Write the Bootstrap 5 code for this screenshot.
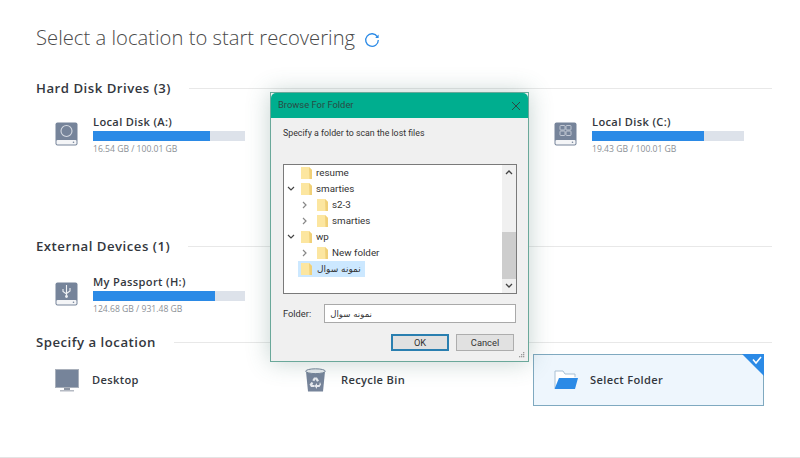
<!DOCTYPE html>
<html lang="en">
<head>
<meta charset="utf-8">
<title>Select a location</title>
<link href="https://cdn.jsdelivr.net/npm/bootstrap@5.3.0/dist/css/bootstrap.min.css" rel="stylesheet">
<style>
html,body{height:458px;overflow:hidden;background:#fff}
body{font-family:"Open Sans","Noto Sans",sans-serif;color:#333;position:relative}
.page-wrap{height:458px;padding:0 32px 0 33px;border-bottom:1px solid #e4e4e4}
.page-title{font-family:"Open Sans",sans-serif;font-weight:300;font-size:20.2px;line-height:30px;color:#4a4a4a;margin:0;padding:22px 0 0 3px;height:74px;letter-spacing:.02px}
.page-title svg{margin-left:9px;vertical-align:-3px}
.sec-head{height:20px;padding-left:3px;gap:18px;font-weight:600;font-size:13.2px;line-height:20px;color:#33373e;letter-spacing:.5px}
.sec-head::after{content:"";flex:1;height:1px;background:#e8e8e8;margin-right:-4px}
.sec-head span{white-space:nowrap}
.loc-grid{display:grid;grid-template-columns:repeat(3,231px);column-gap:19px}
.row-hard{margin-top:14px;height:124px}
.row-ext{margin-top:16px;height:60px}
.row-spec{margin-top:2px}
.head-first{margin-top:4px}
.drive{padding-left:22px;gap:15px;height:44px}
.drive.drive-last{padding-left:21px}
.drive-body{width:152px}
.drive-name{font-weight:600;font-size:11.1px;line-height:15px;height:17px;color:#33373e;letter-spacing:.35px}
.drive-bar{height:10px;border-radius:0;background:#dde2ea}
.drive-bar .progress-bar{background:#2b8ae6}
.drive-size{font-size:8.6px;line-height:12px;margin-top:2px;color:#8b9096}
.spot{height:52px;padding-left:22px;gap:13px;font-weight:600;font-size:11.1px;color:#33373e;letter-spacing:.35px;position:relative}
.spot.spot-bin{gap:15px}
.spot.active{background:#eef6fd;border:1px solid #7fa9c0;padding-left:20px;gap:12px}
.corner{position:absolute;top:-1px;right:-1px}
.browse{position:absolute;left:270px;top:92px;width:259px;height:270px;background:#f0f0f0;border:1px solid #6aa89a;border-radius:0;box-shadow:0 0 22px rgba(60,110,100,.3);font-family:Roboto,sans-serif;font-size:8.8px;color:#333}
.browse-head{height:25px;padding:0 7px;background:#00ae8f;color:#2b4a44;font-size:9.4px;border:0;border-radius:0}
.browse-close{line-height:0}
.browse-body{padding:0 12px}
.browse-hint{padding-top:9px;height:46px;line-height:12px}
.tree{height:130px;background:#fff;border:1px solid #7a7a7a;position:relative;overflow:hidden;width:234px}
.tree-row{height:16px;line-height:16px;font-size:9.8px;white-space:nowrap}
.chev{width:14px;flex:none;text-align:center;line-height:0}
.lvl1{padding-left:14px}
.folder{flex:none;margin-right:4px}
.fold-a{margin-left:3px}
.fold-b{margin-left:5px}
.selected-row{background:#cce8ff;padding:0 4px 0 3px;height:16px;display:inline-flex;align-items:center}
.selected-row .folder{margin-right:5px}
.scroll-rail{position:absolute;right:0;top:0;bottom:0;width:14px;background:#f0f0f0}
.scroll-thumb{position:absolute;left:0;right:0;top:67px;height:47px;background:#cdcdcd}
.scroll-up{position:absolute;top:4px;left:3px;line-height:0}
.scroll-down{position:absolute;bottom:4px;left:3px;line-height:0}
.folder-field{margin-top:10px;gap:13px;height:19px}
.folder-field label{font-size:9.3px;margin:0;width:31px}
.folder-input{height:19px;width:192px;padding:0 5px;font-size:8.6px;border:1px solid #a9a9a9;border-radius:0;font-family:"DejaVu Sans",sans-serif;background:#fff;color:#333;line-height:17px;flex:none}
.arabic{font-family:"DejaVu Sans",sans-serif;font-size:9px}
.browse-btns{margin-top:11px;gap:7px;padding-right:2px}
.browse-btn{width:58px;height:17px;padding:0;font-size:9.3px;line-height:15px;border-radius:0;background:#e1e1e1;border:1px solid #adadad;color:#333}
.browse-btn.primary-btn{border:2px solid #2a7fb0;line-height:13px}
.grip{position:absolute;right:3px;bottom:2px;line-height:0}
</style>
</head>
<body>
<svg width="0" height="0" class="position-absolute"><defs><symbol id="yf" viewBox="0 0 11 12"><path d="M0 0h8l3 3v9H0z" fill="#fce6a0"/><path d="M8 0l3 3v9H8.500z" fill="#f0d078"/></symbol></defs></svg>
<main class="page-wrap">
  <h1 class="page-title">Select a location to start recovering<svg width="16" height="16" viewBox="0 0 16 16" fill="none"><path d="M13.400 4.800A6.300 6.300 0 1 0 14.300 8" stroke="#2b8ae6" stroke-width="1.300"/><path d="M14.600 2.600v3.400h-3.400z" fill="#2b8ae6"/></svg></h1>

  <section>
    <div class="sec-head head-first d-flex align-items-center"><span>Hard Disk Drives (3)</span></div>
    <div class="loc-grid row-hard">
      <div class="drive d-flex align-items-center">
        <svg width="23" height="24" viewBox="0 0 23 24"><rect x="0.5" y="0.5" width="22" height="23" rx="2" fill="#76849a"/><rect x="1.5" y="18" width="20" height="4.500" rx="1" fill="#f4f5f7"/><circle cx="11.500" cy="9" r="5.500" fill="none" stroke="#d5dae2" stroke-width="1.100"/><circle cx="18.500" cy="20.200" r=".8" fill="#76849a"/></svg>
        <div class="drive-body">
          <div class="drive-name">Local Disk (A:)</div>
          <div class="progress drive-bar"><div class="progress-bar" style="width:77%"></div></div>
          <div class="drive-size">16.54 GB / 100.01 GB</div>
        </div>
      </div>
      <div></div>
      <div class="drive drive-last d-flex align-items-center">
        <svg width="23" height="24" viewBox="0 0 23 24"><rect x="0.5" y="0.5" width="22" height="23" rx="2" fill="#76849a"/><rect x="1.5" y="18" width="20" height="4.500" rx="1" fill="#f4f5f7"/><g fill="none" stroke="#c9cfd9" stroke-width=".9"><rect x="6" y="3.500" width="5" height="4.500" rx=".8"/><rect x="12" y="3.500" width="5" height="4.500" rx=".8"/><rect x="6" y="9" width="5" height="4.500" rx=".8"/><rect x="12" y="9" width="5" height="4.500" rx=".8"/></g><circle cx="18.500" cy="20.200" r=".8" fill="#76849a"/></svg>
        <div class="drive-body">
          <div class="drive-name">Local Disk (C:)</div>
          <div class="progress drive-bar"><div class="progress-bar" style="width:74%"></div></div>
          <div class="drive-size">19.43 GB / 100.01 GB</div>
        </div>
      </div>
    </div>
  </section>

  <section>
    <div class="sec-head d-flex align-items-center"><span>External Devices (1)</span></div>
    <div class="loc-grid row-ext">
      <div class="drive d-flex align-items-center">
        <svg width="23" height="24" viewBox="0 0 23 24"><rect x="0.5" y="0.500" width="22" height="23" rx="2" fill="#76849a"/><rect x="1.5" y="18" width="20" height="4.500" rx="1" fill="#f4f5f7"/><path d="M11.500 3v11M8 7v2.500l3.500 2.500M15 6v3l-3.500 2.500" fill="none" stroke="#eef0f3" stroke-width="1.100"/><circle cx="11.500" cy="14.500" r="1.400" fill="#eef0f3"/><circle cx="18.500" cy="20.200" r=".8" fill="#76849a"/></svg>
        <div class="drive-body">
          <div class="drive-name">My Passport (H:)</div>
          <div class="progress drive-bar"><div class="progress-bar" style="width:80%"></div></div>
          <div class="drive-size">124.68 GB / 931.48 GB</div>
        </div>
      </div>
    </div>
  </section>

  <section>
    <div class="sec-head d-flex align-items-center"><span>Specify a location</span></div>
    <div class="loc-grid row-spec">
      <div class="spot d-flex align-items-center">
        <svg width="24" height="23" viewBox="0 0 24 23"><rect x="0.500" y="0.500" width="23" height="18" fill="#76849a" stroke="#a9b0bb"/><rect x="9" y="19" width="6" height="2" fill="#8d95a3"/><rect x="5" y="21" width="14" height="1.500" fill="#b5bac3"/></svg>
        <span>Desktop</span>
      </div>
      <div class="spot spot-bin d-flex align-items-center">
        <svg width="21" height="24" viewBox="0 0 21 24"><path d="M1 3.500h19l-2 20H3z" fill="#76849a"/><ellipse cx="10.500" cy="3.200" rx="9.800" ry="2.400" fill="#e8ebef" stroke="#76849a"/><path d="M9 9.500h3l2 3.300-2 1-1.500-2.500-1.200 2-2-1zM15 14l1 2.500-1.500 2.500h-2.500v2l-2.500-3 2.500-3v2h2.200zM6.500 14l1.800 1-1 2h2.200v2H6l-1.500-2.500z" fill="#e6e9ee"/></svg>
        <span>Recycle Bin</span>
      </div>
      <div class="spot active d-flex align-items-center">
        <svg width="24" height="20" viewBox="0 0 24 20"><path d="M1 18V1h8l2 3h10v3" fill="#fff" stroke="#a9c0d3"/><path d="M5 8h19l-3 11H0.500z" fill="#2b8ae6"/></svg>
        <span>Select Folder</span>
        <svg class="corner" width="22" height="22" viewBox="0 0 22 22"><path d="M0 0h22v22z" fill="#2b8ae6"/><path d="M11 5.500l3 3.500 5-6" fill="none" stroke="#fff" stroke-width="1.500"/></svg>
      </div>
    </div>
  </section>
</main>

<div class="browse card" role="dialog">
  <div class="browse-head card-header d-flex align-items-center justify-content-between">
    <span>Browse For Folder</span>
    <span class="browse-close"><svg width="10" height="10" viewBox="0 0 10 10"><path d="M1 1l8 8M9 1l-8 8" stroke="#2b4a44" stroke-width="1"/></svg></span>
  </div>
  <div class="browse-body">
    <div class="browse-hint">Specify a folder to scan the lost files</div>
    <div class="tree">
      <div class="tree-row d-flex align-items-center"><span class="chev"></span><svg class="folder fold-a" width="11" height="12"><use href="#yf"/></svg>resume</div>
      <div class="tree-row d-flex align-items-center"><span class="chev"><svg width="8" height="6" viewBox="0 0 8 6"><path d="M1 1l3 3 3-3" fill="none" stroke="#444" stroke-width="1.200"/></svg></span><svg class="folder fold-a" width="11" height="12"><use href="#yf"/></svg>smarties</div>
      <div class="tree-row d-flex align-items-center lvl1"><span class="chev"><svg width="6" height="8" viewBox="0 0 6 8"><path d="M1 1l3 3-3 3" fill="none" stroke="#888" stroke-width="1.200"/></svg></span><svg class="folder fold-b" width="11" height="12"><use href="#yf"/></svg>s2-3</div>
      <div class="tree-row d-flex align-items-center lvl1"><span class="chev"><svg width="6" height="8" viewBox="0 0 6 8"><path d="M1 1l3 3-3 3" fill="none" stroke="#888" stroke-width="1.200"/></svg></span><svg class="folder fold-b" width="11" height="12"><use href="#yf"/></svg>smarties</div>
      <div class="tree-row d-flex align-items-center"><span class="chev"><svg width="8" height="6" viewBox="0 0 8 6"><path d="M1 1l3 3 3-3" fill="none" stroke="#444" stroke-width="1.200"/></svg></span><svg class="folder fold-a" width="11" height="12"><use href="#yf"/></svg>wp</div>
      <div class="tree-row d-flex align-items-center lvl1"><span class="chev"><svg width="6" height="8" viewBox="0 0 6 8"><path d="M1 1l3 3-3 3" fill="none" stroke="#888" stroke-width="1.200"/></svg></span><svg class="folder fold-b" width="11" height="12"><use href="#yf"/></svg>New folder</div>
      <div class="tree-row d-flex align-items-center"><span class="chev"></span><span class="selected-row"><svg class="folder" width="11" height="12"><use href="#yf"/></svg><span class="arabic" dir="rtl">نمونه سوال</span></span></div>
      <div class="scroll-rail">
        <span class="scroll-up"><svg width="8" height="6" viewBox="0 0 8 6"><path d="M1 5l3-3 3 3" fill="none" stroke="#444" stroke-width="1.300"/></svg></span>
        <div class="scroll-thumb"></div>
        <span class="scroll-down"><svg width="8" height="6" viewBox="0 0 8 6"><path d="M1 1l3 3 3-3" fill="none" stroke="#444" stroke-width="1.300"/></svg></span>
      </div>
    </div>
    <div class="folder-field d-flex align-items-center">
      <label for="fld">Folder:</label>
      <input id="fld" class="folder-input form-control" value="نمونه سوال">
    </div>
    <div class="browse-btns d-flex justify-content-end">
      <button class="btn browse-btn primary-btn" type="button">OK</button>
      <button class="btn browse-btn" type="button">Cancel</button>
    </div>
  </div>
  <span class="grip"><svg width="7" height="7" viewBox="0 0 7 7" fill="#9a9a9a"><rect x="5" y="0" width="1.300" height="1.300"/><rect x="3" y="2" width="1.300" height="1.300"/><rect x="5" y="2" width="1.300" height="1.300"/><rect x="1" y="4" width="1.300" height="1.300"/><rect x="3" y="4" width="1.300" height="1.300"/><rect x="5" y="4" width="1.300" height="1.300"/></svg></span>
</div>
<script src="https://cdn.jsdelivr.net/npm/bootstrap@5.3.0/dist/js/bootstrap.bundle.min.js"></script>
</body>
</html>
